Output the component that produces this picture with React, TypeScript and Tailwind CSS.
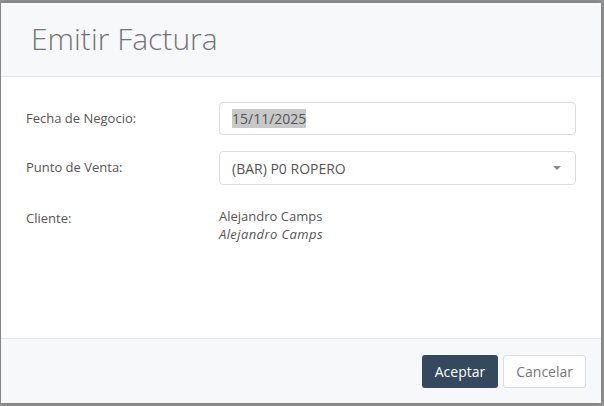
export default function App() {
  return (
    <div className="h-[406px] w-[604px] overflow-hidden bg-[#969696] pl-[1px] pt-[3px] font-['Open_Sans',sans-serif]">
      <div className="flex h-[400px] w-[600px] flex-col bg-white shadow-[0_0_6px_rgba(0,0,0,0.25)]">
        <div className="flex h-[74px] items-center border-b border-[#e3e5e8] bg-[#f7f8fa] pl-[30px] pb-[1px]">
          <h1 className="text-[30px] font-light leading-none text-[#757575]">Emitir Factura</h1>
        </div>

        <div className="flex flex-1 flex-col gap-4 px-[25px] pt-[25px]">
          <div className="flex items-center">
            <label className="w-[193px] text-[13px] text-[#555]">Fecha de Negocio:</label>
            <div className="flex h-[33px] flex-1 items-center rounded-[4px] border border-[#dcdcdc] px-3 text-[14px] text-[#555]">
              <span className="bg-[#c8c8c8] leading-[19px]">15/11/2025</span>
            </div>
          </div>

          <div className="flex items-center">
            <label className="w-[193px] text-[13px] text-[#555]">Punto de Venta:</label>
            <div className="flex h-[34px] flex-1 items-center justify-between rounded-[4px] border border-[#dcdcdc] pl-3 pr-[14px] text-[14px] text-[#555]">
              <span>(BAR) P0 ROPERO</span>
              <span className="h-0 w-0 border-x-[4px] border-t-[4px] border-x-transparent border-t-[#888]" />
            </div>
          </div>

          <div className="mt-[6px] flex">
            <label className="w-[193px] pt-[2px] text-[13px] text-[#555]">Cliente:</label>
            <div className="flex flex-col text-[13px] leading-[18px] text-[#555]">
              <span>Alejandro Camps</span>
              <span className="italic tracking-[0.4px]">Alejandro Camps</span>
            </div>
          </div>
        </div>

        <div className="flex h-[65px] items-center justify-end gap-[5px] border-t border-[#e3e5e8] bg-[#f7f8fa] pr-[15px]">
          <button className="h-[33px] rounded-[3px] bg-[#34495e] px-[13px] text-[14px] text-white">Aceptar</button>
          <button className="h-[33px] rounded-[3px] border border-[#dcdcdc] bg-white px-3 text-[14px] text-[#777]">Cancelar</button>
        </div>
      </div>
    </div>
  );
}
